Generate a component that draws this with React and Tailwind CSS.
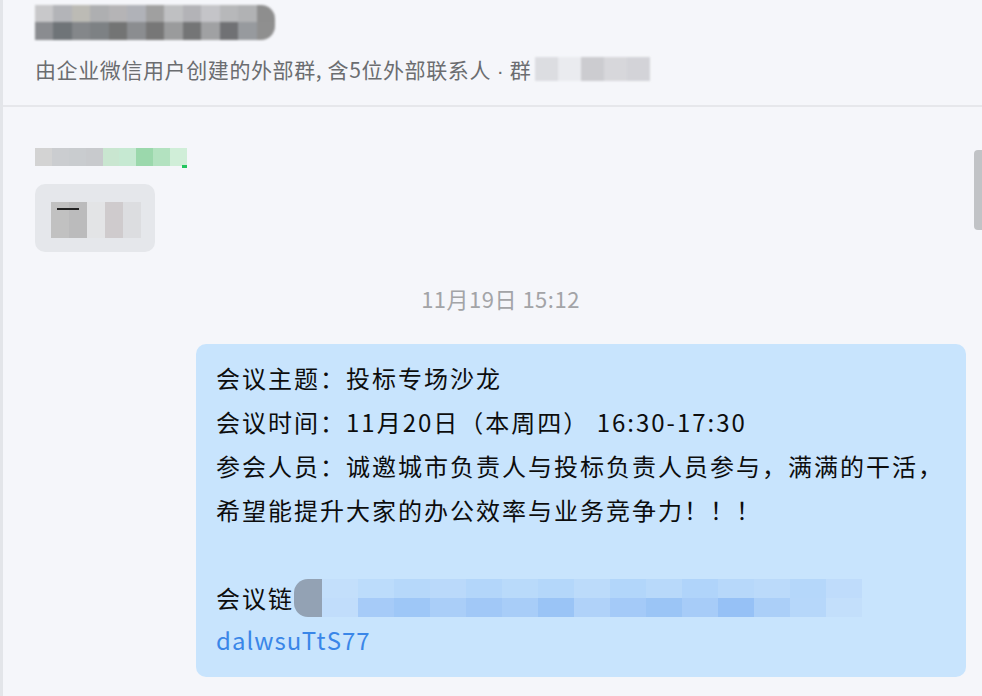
const titleTop = ['bg-[#c8c8ca]', 'bg-[#b3b4b8]', 'bg-[#bcbbb5]', 'bg-[#aeafb1]', 'bg-[#b5b4b6]', 'bg-[#b0b2b8]', 'bg-[#a0a0a0]', 'bg-[#bfc0c2]', 'bg-[#b3b3b7]', 'bg-[#c4c4c8]', 'bg-[#b7b8ba]', 'bg-[#b1b2b4]', 'bg-[#8e8e8e]']
const titleBottom = ['bg-[#8a8c90]', 'bg-[#6f7478]', 'bg-[#84878a]', 'bg-[#7d8184]', 'bg-[#737474]', 'bg-[#8b8d90]', 'bg-[#777777]', 'bg-[#9a9b9c]', 'bg-[#747576]', 'bg-[#a0a1a3]', 'bg-[#707174]', 'bg-[#979a9e]', 'bg-[#8f8f8f]']
const groupTail = ['bg-[#d6d7db]', 'bg-[#e8e9ed]', 'bg-[#c2c2c6]', 'bg-[#d0d0d4]', 'bg-[#cbcbd0]']
const senderCells = ['bg-[#d3d3d3]', 'bg-[#cbcdd0]', 'bg-[#c9cccf]', 'bg-[#c8cacd]', 'bg-[#c9e6d0]', 'bg-[#c6e9d2]', 'bg-[#9bd8ac]', 'bg-[#b3e2c0]', 'bg-[#d0eed8]']
const bubbleCells = ['bg-[#c1c1c1]', 'bg-[#bbbbbc]', 'bg-[#e3e4e6]', 'bg-[#cfcbcd]', 'bg-[#dcdde0]']
const linkTop = ['bg-[#c3dffb]', 'bg-[#bcdcfb]', 'bg-[#b6d8fa]', 'bg-[#bad9fa]', 'bg-[#b3d6fa]', 'bg-[#b9dafa]', 'bg-[#b4d7fa]', 'bg-[#bcdbfa]', 'bg-[#b2d6fa]', 'bg-[#b8d9fa]', 'bg-[#b0d4fa]', 'bg-[#b7d8fa]', 'bg-[#bbdafa]', 'bg-[#b5d7fa]', 'bg-[#bfdcfb]']
const linkBottom = ['bg-[#c1ddfb]', 'bg-[#a6cbf8]', 'bg-[#9ec7f7]', 'bg-[#aacef8]', 'bg-[#a1c8f7]', 'bg-[#a8cdf8]', 'bg-[#9ac4f6]', 'bg-[#b0d2f9]', 'bg-[#a4caf8]', 'bg-[#9bc5f6]', 'bg-[#a7ccf8]', 'bg-[#96c1f6]', 'bg-[#abcff8]', 'bg-[#b6d7fa]', 'bg-[#c3dffb]']

const font = "font-['Noto_Sans_CJK_SC','Noto_Sans',sans-serif]"

function Cells({ cells, cell }) {
  return (
    <div className="flex">
      {cells.map((c, i) => (
        <div key={i} className={`${c} ${cell}`} />
      ))}
    </div>
  )
}

export default function App() {
  return (
    <div className={`w-[982px] h-[696px] overflow-hidden bg-[#f5f6fa] border-l-[3px] border-[#e3e5e9] flex flex-col ${font}`}>
      {/* Header */}
      <div className="h-[107px] shrink-0 border-b-2 border-[#e6e7eb] pl-[32px]">
        <div className="mt-[5px] w-[240px] h-[35px] rounded-r-[14px] overflow-hidden blur-[0.8px]">
          <Cells cells={titleTop} cell="w-[18.5px] h-[17px]" />
          <Cells cells={titleBottom} cell="w-[18.5px] h-[18px]" />
        </div>
        <div className="mt-[16px] flex items-center h-[28px] text-[21px] tracking-[0.6px] leading-[28px] text-[#6b6d70] whitespace-nowrap">
          <span>由企业微信用户创建的外部群, 含5位外部联系人<span className="font-['Liberation_Sans',sans-serif] tracking-normal"> · </span>群</span>
          <div className="ml-[4px] mt-[-2px] blur-[0.8px] opacity-80">
            <Cells cells={groupTail} cell="w-[23px] h-[24px]" />
          </div>
        </div>
      </div>

      {/* Messages */}
      <div className="relative flex-1 pt-[41px] pl-[32px] pr-[16px]">
        <div className="absolute right-0 top-[43px] w-[8px] h-[80px] rounded-l-[4px] bg-[#c1c3c6]" />

        <div className="relative w-[152px] h-[18px] blur-[0.5px]">
          <Cells cells={senderCells} cell="w-[17px] h-[18px]" />
          <div className="absolute right-[0px] bottom-[-2px] w-[5px] h-[3px] bg-[#22c55e]" />
        </div>

        <div className="mt-[18px] w-[120px] h-[68px] rounded-[10px] bg-[#e5e7eb] pt-[18px] pl-[16px]">
          <div className="relative blur-[0.6px]">
            <Cells cells={bubbleCells} cell="w-[18px] h-[36px]" />
            <div className="absolute left-[6px] top-[6px] w-[22px] h-[2px] bg-[#222]" />
          </div>
        </div>

        <div className="mt-[32px] text-center text-[22px] tracking-[0.5px] leading-[28px] text-[#a3a4a7]">11月19日 15:12</div>

        <div className="mt-[32px] ml-[161px] rounded-[10px] bg-[#c8e4fd] pl-[20px] pr-[16px] pt-[12px] pb-[17px] text-[24px] tracking-[2px] leading-[44px] text-[#0d0d0d] whitespace-nowrap">
          <div>会议主题：投标专场沙龙</div>
          <div>会议时间：11月20日（本周四） 16:30-17:30</div>
          <div>参会人员：诚邀城市负责人与投标负责人员参与，满满的干活，</div>
          <div>希望能提升大家的办公效率与业务竞争力！！！</div>
          <div className="h-[44px]" />
          <div className="flex items-center">
            <span>会议链</span>
            <div className="flex items-center blur-[0.6px]">
              <div className="w-[28px] h-[38px] rounded-l-[14px] bg-[#93a2b4]" />
              <div>
                <Cells cells={linkTop} cell="w-[36px] h-[19px]" />
                <Cells cells={linkBottom} cell="w-[36px] h-[19px]" />
              </div>
            </div>
          </div>
          <div className="text-[#3a86e8] leading-[40px] tracking-[1px]">dalwsuTtS77</div>
        </div>
      </div>
    </div>
  )
}
